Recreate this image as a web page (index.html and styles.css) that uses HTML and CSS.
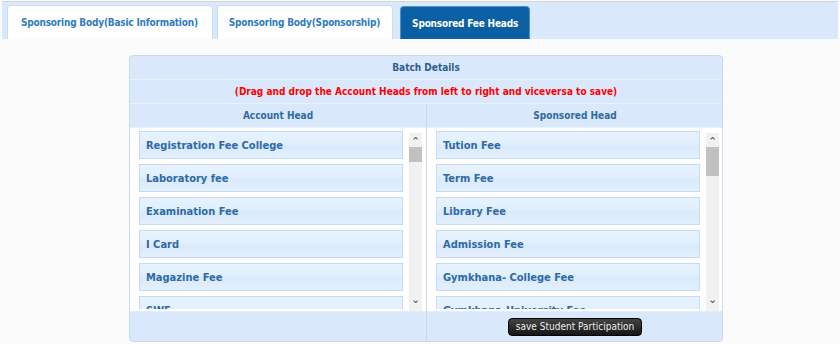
FILE: index.html
```html
<!DOCTYPE html>
<html lang="en">
<head>
  <meta charset="UTF-8">
  <title>Sponsored Fee Heads</title>
  <link rel="stylesheet" href="styles.css">
</head>
<body>
  <div class="tab-bar">
    <div class="tab">Sponsoring Body(Basic Information)</div>
    <div class="tab second">Sponsoring Body(Sponsorship)</div>
    <div class="tab active">Sponsored Fee Heads</div>
  </div>

  <div class="panel">
    <div class="row title">Batch Details</div>
    <div class="row note">(Drag and drop the Account Heads from left to right and viceversa to save)</div>
    <div class="cols">
      <div class="col">
        <div class="col-head">Account Head</div>
        <div class="list-wrap">
          <div class="list">
            <div class="item">Registration Fee College</div>
            <div class="item">Laboratory fee</div>
            <div class="item">Examination Fee</div>
            <div class="item">I Card</div>
            <div class="item">Magazine Fee</div>
            <div class="item">SWF</div>
          </div>
          <div class="scrollbar">
            <span class="arrow">&#8963;</span>
            <div class="track"><div class="thumb thumb-left"></div></div>
            <span class="arrow down">&#8964;</span>
          </div>
        </div>
        <div class="col-foot"></div>
      </div>
      <div class="col">
        <div class="col-head">Sponsored Head</div>
        <div class="list-wrap">
          <div class="list">
            <div class="item">Tution Fee</div>
            <div class="item">Term Fee</div>
            <div class="item">Library Fee</div>
            <div class="item">Admission Fee</div>
            <div class="item">Gymkhana- College Fee</div>
            <div class="item">Gymkhana-University Fee</div>
          </div>
          <div class="scrollbar">
            <span class="arrow">&#8963;</span>
            <div class="track"><div class="thumb thumb-right"></div></div>
            <span class="arrow down">&#8964;</span>
          </div>
        </div>
        <div class="col-foot">
          <button class="save-btn">save Student Participation</button>
        </div>
      </div>
    </div>
  </div>
</body>
</html>
```

FILE: styles.css
```css
body {
  margin: 0;
  background: #fbfbfb;
  font-family: "DejaVu Sans Condensed", "DejaVu Sans", sans-serif;
  height: 344px;
  overflow: hidden;
}
.tab-bar {
  margin: 1px 2px 0 2px;
  border-top: 1px solid #d6d6d6;
  background: #dae8fc;
  height: 38px;
  padding: 3px 0 0 5px;
  box-sizing: border-box;
  display: flex;
  align-items: flex-end;
  gap: 4px;
}
.tab {
  height: 34px;
  box-sizing: border-box;
  padding: 0 14px 0 13px;
  background: #fff;
  border: 1px solid #c9ddf6;
  border-bottom: none;
  border-radius: 4px 4px 0 0;
  color: #2f7bc2;
  font-weight: bold;
  font-size: 10px;
  letter-spacing: -0.2px;
  display: flex;
  align-items: center;
}
.tab.second { padding: 0 12px 0 11px; }
.tab.active {
  margin-left: 3px;
  height: 33px;
  padding: 0 11px;
  background: #0b5fa3;
  border-color: #4d93d3;
  color: #fff;
}
.panel {
  width: 594px;
  margin: 16px 0 0 129px;
  border: 1px solid #c9d9ee;
  border-radius: 4px;
  background: #dae8fc;
  box-sizing: border-box;
  overflow: hidden;
}
.row {
  height: 23px;
  border-bottom: 1px solid #eaf1fb;
  display: flex;
  align-items: center;
  justify-content: center;
  font-weight: bold;
  font-size: 10px;
}
.title { color: #2d5f92; }
.note { color: #ff0000; }
.cols {
  display: grid;
  grid-template-columns: 1fr 1fr;
}
.col + .col { border-left: 1px solid #cfd9e6; }
.col-head {
  height: 23px;
  border-bottom: 1px solid #eaf1fb;
  display: flex;
  align-items: center;
  justify-content: center;
  color: #2f6aa3;
  font-weight: bold;
  font-size: 10px;
}
.list-wrap {
  background: #fff;
  height: 184px;
  display: flex;
  padding: 3px 4px 2px 9px;
  box-sizing: border-box;
  gap: 6px;
  border-bottom: 1px solid #e4ecf7;
}
.list {
  width: 264px;
  overflow: hidden;
  display: flex;
  flex-direction: column;
  gap: 5px;
}
.item {
  flex: none;
  height: 28px;
  box-sizing: border-box;
  border: 1px solid #c3dcf4;
  background: linear-gradient(#e7f3fe, #e1effd 45%, #d9eafb 55%, #e3f0fd);
  color: #2e6aa6;
  font-weight: bold;
  font-size: 11px;
  padding: 0 6px;
  display: flex;
  align-items: center;
}
.scrollbar {
  width: 13px;
  margin-top: 2px;
  height: 178px;
  background: #f1f1f1;
  display: flex;
  flex-direction: column;
  align-items: center;
}
.arrow {
  height: 14px;
  font-size: 11px;
  line-height: 18px;
  color: #505050;
  font-family: "DejaVu Sans", sans-serif;
}
.arrow.down { line-height: 6px; }
.track { flex: 1; width: 100%; }
.thumb { background: #c1c1c1; width: 100%; }
.thumb-left { height: 15px; }
.thumb-right { height: 29px; }
.col-foot {
  height: 29px;
  display: flex;
  align-items: center;
  justify-content: center;
}
.save-btn {
  height: 18px;
  padding: 0 7px;
  border: 1px solid #000;
  border-radius: 4px;
  background: linear-gradient(#444, #151515);
  color: #eee;
  font-family: "DejaVu Sans Condensed", "DejaVu Sans", sans-serif;
  font-size: 10px;
}
```
